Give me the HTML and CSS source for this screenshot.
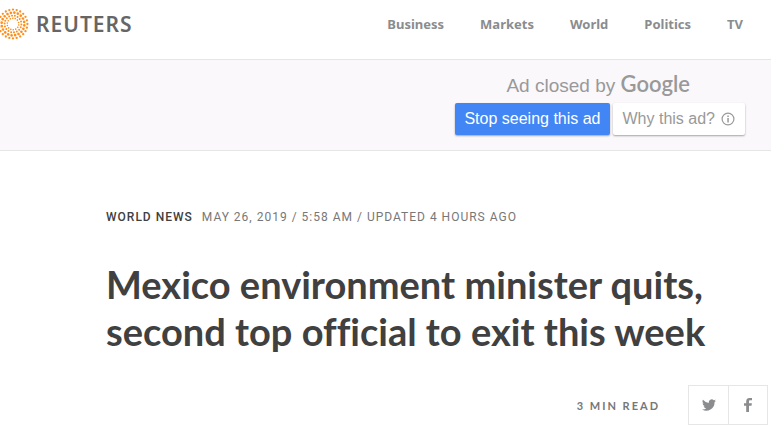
FILE: index.html
```html
<!DOCTYPE html>
<html lang="en">
<head>
    <meta charset="UTF-8">
    <meta name="viewport" content="width=device-width, initial-scale=1.0">
    <title>Mexico environment minister quits, second top official to exit this week - Reuters</title>
    <link rel="stylesheet" href="styles.css">
</head>
<body>
    <header class="site-header">
        <a class="logo" href="#">
            <svg class="logo-mark" viewBox="-16 -16 32 32" aria-hidden="true">
                <circle r="14.4" pathLength="240" stroke-width="2.3" stroke-dasharray="0 10"/>
                <circle r="11.4" pathLength="200" stroke-width="2.7" stroke-dasharray="0 10" transform="rotate(7)"/>
                <circle r="8.4" pathLength="180" stroke-width="2" stroke-dasharray="0 10" transform="rotate(3)"/>
                <circle r="5.8" pathLength="140" stroke-width="1.6" stroke-dasharray="0 10" transform="rotate(10)"/>
            </svg>
            <span class="logo-name">REUTERS</span>
        </a>
        <nav class="site-nav">
            <a href="#">Business</a>
            <a href="#">Markets</a>
            <a href="#">World</a>
            <a href="#">Politics</a>
            <a href="#">TV</a>
        </nav>
    </header>

    <aside class="ad-band">
        <div class="ad-closed">
            <p class="ad-text">Ad closed by <span class="google">Google</span></p>
            <div class="ad-buttons">
                <button type="button" class="ad-btn ad-stop">Stop seeing this ad</button>
                <button type="button" class="ad-btn ad-why">Why this ad?
                    <svg class="info" viewBox="0 0 14 14" aria-hidden="true">
                        <circle cx="7" cy="7" r="5.9" fill="none" stroke="currentColor" stroke-width="1.2"/>
                        <path d="M6.3 3.4h1.5v1.5H6.3zM6.3 5.9h1.5v4.6H6.3z" fill="currentColor"/>
                    </svg>
                </button>
            </div>
        </div>
    </aside>

    <main class="article">
        <div class="meta">
            <a class="channel" href="#">WORLD NEWS</a>
            <span class="date">MAY 26, 2019 / 5:58 AM / UPDATED 4 HOURS AGO</span>
        </div>
        <h1>Mexico environment minister quits, second top official to exit this week</h1>
    </main>

    <div class="tools">
        <span class="read-time">3 MIN READ</span>
        <div class="share">
            <a href="#" aria-label="Share on Twitter">
                <svg viewBox="0 0 24 24" width="14" height="14"><path d="M24 4.6a10 10 0 0 1-2.8.8 5 5 0 0 0 2.1-2.7 10 10 0 0 1-3.1 1.2 4.9 4.9 0 0 0-8.4 4.5A14 14 0 0 1 1.7 3.1a4.9 4.9 0 0 0 1.5 6.6 5 5 0 0 1-2.2-.6v.1a4.9 4.9 0 0 0 3.9 4.8 5 5 0 0 1-2.2.1 4.9 4.9 0 0 0 4.6 3.4A9.9 9.9 0 0 1 0 19.5a14 14 0 0 0 21.5-12.4A10 10 0 0 0 24 4.6z"/></svg>
            </a>
            <a href="#" aria-label="Share on Facebook">
                <svg viewBox="0 0 8 14" width="8" height="14"><path d="M2.2 14V7.8H0V5.3h2.2V3.4C2.2 1.2 3.5 0 5.5 0H8v2.3H6.4C5.3 2.3 5 2.8 5 3.6v1.7h2.9l-.4 2.5H5V14z"/></svg>
            </a>
        </div>
    </div>
</body>
</html>
```

FILE: styles.css
```css
* { box-sizing: border-box; }
body {
    margin: 0;
    background: #fff;
    color: #404040;
    font-family: Lato, "Noto Sans", sans-serif;
}
a { color: inherit; text-decoration: none; }
h1, p { margin: 0; }

.site-header {
    display: flex;
    align-items: center;
    justify-content: space-between;
    height: 60px;
    padding: 0 28px 12px 0;
    border-bottom: 1px solid #e6e6e6;
    font-family: "Noto Sans", sans-serif;
}
.logo { display: flex; align-items: center; gap: 7px; margin-left: -3px; }
.logo-mark { width: 32px; height: 32px; }
.logo-mark circle { fill: none; stroke: #ff8f1c; stroke-linecap: round; }
.logo-name { color: #666; font-size: 21px; font-weight: 600; letter-spacing: 1px; }
.site-nav {
    display: flex;
    gap: 36px;
    color: #8a8c8e;
    font-size: 13px;
    font-weight: 700;
}

.ad-band {
    display: flex;
    justify-content: flex-end;
    padding: 10px 26px 15px;
    background: #faf8fb;
    border-bottom: 1px solid #e6e6e6;
    font-family: "Liberation Sans", Arial, sans-serif;
}
.ad-text {
    height: 28px;
    padding-right: 4px;
    color: #999;
    font-size: 19px;
    line-height: 28px;
    text-align: center;
}
.google { font-family: Lato, sans-serif; font-size: 22px; font-weight: 600; }
.ad-buttons { display: flex; gap: 3px; margin-top: 5px; }
.ad-btn {
    display: flex;
    align-items: center;
    height: 32px;
    padding: 0 9px;
    border: 0;
    border-radius: 2px;
    box-shadow: 0 1px 2px rgba(0, 0, 0, 0.35);
    font-family: inherit;
    font-size: 16px;
    white-space: nowrap;
    cursor: pointer;
}
.ad-stop { background: #4285f4; color: #fff; }
.ad-why { gap: 6px; padding: 0 10px; background: #fff; color: #999; }
.info { width: 14px; height: 14px; }

.article { padding: 58px 60px 0 106px; }
.meta {
    display: flex;
    gap: 9px;
    font-family: Roboto, sans-serif;
    font-size: 12px;
    line-height: 16px;
    letter-spacing: 1px;
}
.channel { font-weight: 500; }
.date { color: #777; }
h1 {
    margin-top: 36px;
    font-size: 38px;
    font-weight: 700;
    line-height: 47px;
    font-variant-ligatures: none;
}

.tools {
    display: flex;
    align-items: center;
    justify-content: flex-end;
    gap: 28px;
    margin-top: 30px;
    padding-right: 3px;
}
.read-time { color: #777; font-size: 11px; font-weight: 700; letter-spacing: 2px; }
.share { display: flex; border: 1px solid #e6e6e6; }
.share a {
    display: flex;
    align-items: center;
    justify-content: center;
    width: 39px;
    height: 38px;
}
.share a + a { border-left: 1px solid #e6e6e6; }
.share svg { fill: #8a8c8e; }
```
